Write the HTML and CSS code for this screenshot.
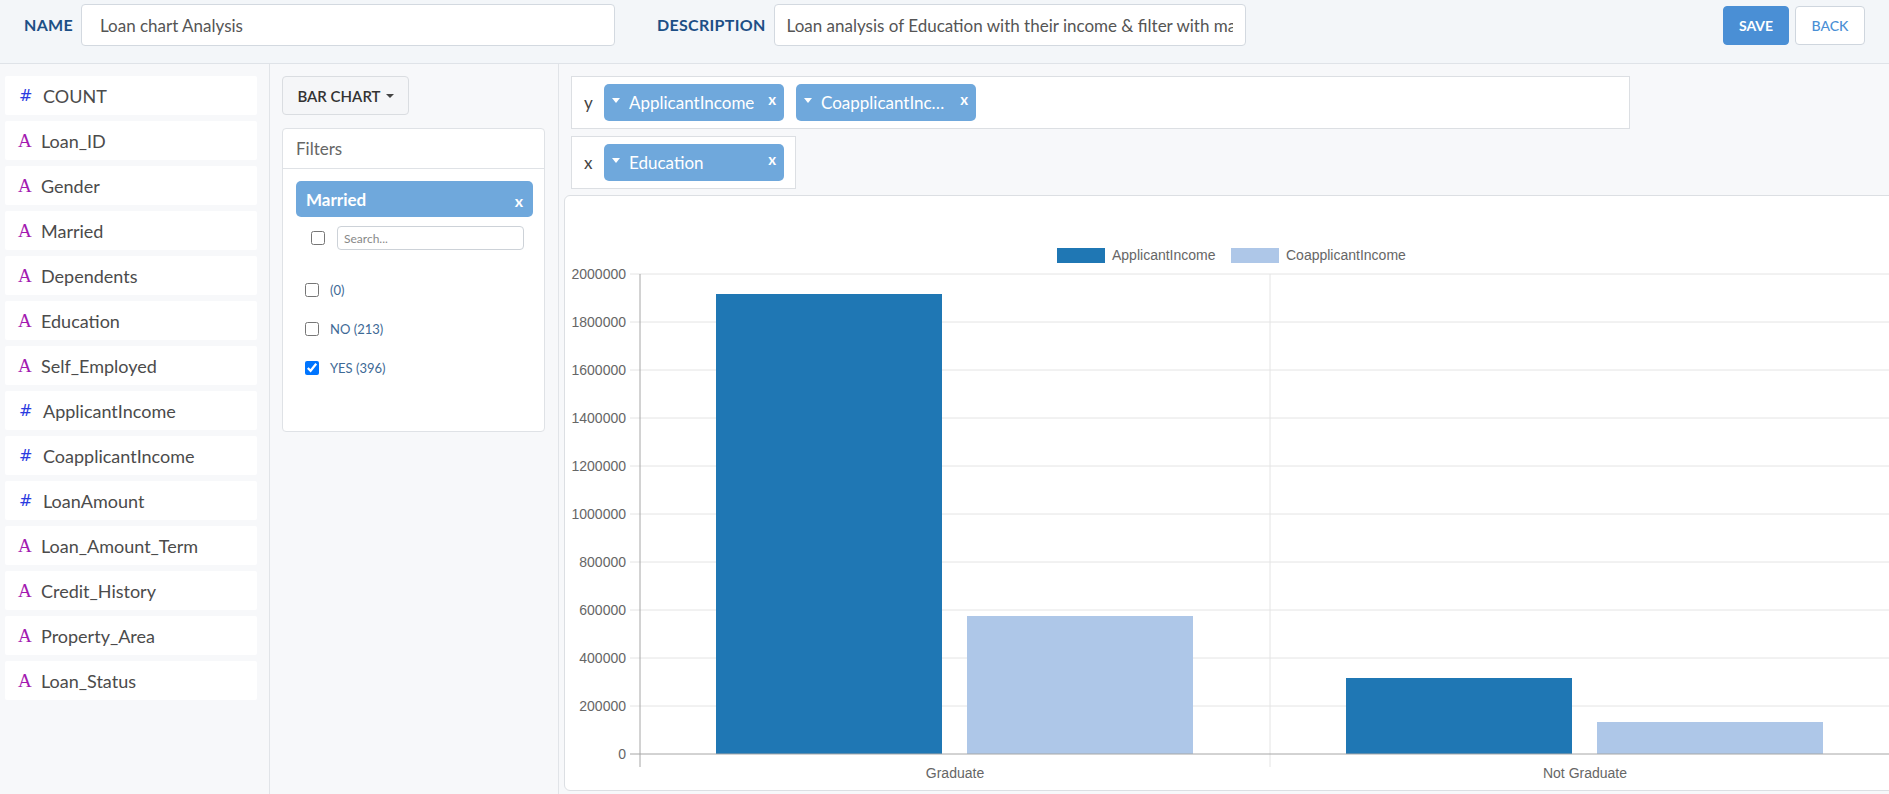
FILE: index.html
```html
<!DOCTYPE html>
<html>
<head>
<meta charset="utf-8">
<link rel="stylesheet" href="styles.css">
</head>
<body>
<header class="topbar">
  <label class="field-label">NAME</label>
  <input class="field-input name-input" value="Loan chart Analysis">
  <label class="field-label desc-label">DESCRIPTION</label>
  <input class="field-input desc-input" value="Loan analysis of Education with their income &amp; filter with married">
  <div class="actions">
    <button class="btn btn-save">SAVE</button>
    <button class="btn btn-back">BACK</button>
  </div>
</header>
<main class="main">
  <aside class="fields">
    <div class="field"><span class="ico num">#</span><span class="fname num-name">COUNT</span></div>
    <div class="field"><span class="ico str">A</span><span class="fname">Loan_ID</span></div>
    <div class="field"><span class="ico str">A</span><span class="fname">Gender</span></div>
    <div class="field"><span class="ico str">A</span><span class="fname">Married</span></div>
    <div class="field"><span class="ico str">A</span><span class="fname">Dependents</span></div>
    <div class="field"><span class="ico str">A</span><span class="fname">Education</span></div>
    <div class="field"><span class="ico str">A</span><span class="fname">Self_Employed</span></div>
    <div class="field"><span class="ico num">#</span><span class="fname num-name">ApplicantIncome</span></div>
    <div class="field"><span class="ico num">#</span><span class="fname num-name">CoapplicantIncome</span></div>
    <div class="field"><span class="ico num">#</span><span class="fname num-name">LoanAmount</span></div>
    <div class="field"><span class="ico str">A</span><span class="fname">Loan_Amount_Term</span></div>
    <div class="field"><span class="ico str">A</span><span class="fname">Credit_History</span></div>
    <div class="field"><span class="ico str">A</span><span class="fname">Property_Area</span></div>
    <div class="field"><span class="ico str">A</span><span class="fname">Loan_Status</span></div>
  </aside>
  <section class="controls">
    <button class="chart-type">BAR CHART <span class="caret-dark"></span></button>
    <div class="filters">
      <div class="filters-head">Filters</div>
      <div class="filters-body">
        <div class="filter-chip"><span>Married</span><span class="chip-x">x</span></div>
        <div class="search-row">
          <input type="checkbox" class="cb">
          <input class="search" placeholder="Search...">
        </div>
        <div class="opts">
          <label class="opt"><input type="checkbox" class="cb"><span>(0)</span></label>
          <label class="opt"><input type="checkbox" class="cb"><span>NO (213)</span></label>
          <label class="opt"><input type="checkbox" class="cb" checked><span>YES (396)</span></label>
        </div>
      </div>
    </div>
  </section>
  <section class="canvas-col">
    <div class="axis-box y-box">
      <span class="axis-name">y</span>
      <div class="pill"><span class="pill-caret"></span><span class="pill-text">ApplicantIncome</span><span class="pill-x">x</span></div>
      <div class="pill"><span class="pill-caret"></span><span class="pill-text">CoapplicantIncome</span><span class="pill-x">x</span></div>
    </div>
    <div class="axis-box x-box">
      <span class="axis-name">x</span>
      <div class="pill"><span class="pill-caret"></span><span class="pill-text">Education</span><span class="pill-x">x</span></div>
    </div>
    <div class="chart-card">
      <svg class="chart-svg" width="1336" height="594" viewBox="0 0 1336 594">
        <g class="grid">
          <line x1="65" y1="78" x2="1336" y2="78"/>
          <line x1="65" y1="126" x2="1336" y2="126"/>
          <line x1="65" y1="174" x2="1336" y2="174"/>
          <line x1="65" y1="222" x2="1336" y2="222"/>
          <line x1="65" y1="270" x2="1336" y2="270"/>
          <line x1="65" y1="318" x2="1336" y2="318"/>
          <line x1="65" y1="366" x2="1336" y2="366"/>
          <line x1="65" y1="414" x2="1336" y2="414"/>
          <line x1="65" y1="462" x2="1336" y2="462"/>
          <line x1="65" y1="510" x2="1336" y2="510"/>
          <line x1="705" y1="78" x2="705" y2="571"/>
        </g>
        <g class="ylabels">
          <text x="61" y="83">2000000</text>
          <text x="61" y="131">1800000</text>
          <text x="61" y="179">1600000</text>
          <text x="61" y="227">1400000</text>
          <text x="61" y="275">1200000</text>
          <text x="61" y="323">1000000</text>
          <text x="61" y="371">800000</text>
          <text x="61" y="419">600000</text>
          <text x="61" y="467">400000</text>
          <text x="61" y="515">200000</text>
          <text x="61" y="563">0</text>
        </g>
        <rect x="151" y="98" width="226" height="460" fill="#1f77b4"/>
        <rect x="402" y="420" width="226" height="138" fill="#aec7e8"/>
        <rect x="781" y="482" width="226" height="76" fill="#1f77b4"/>
        <rect x="1032" y="526" width="226" height="32" fill="#aec7e8"/>
        <line class="axis" x1="75" y1="78" x2="75" y2="571"/>
        <line class="axis" x1="65" y1="558" x2="1336" y2="558"/>
        <g class="xlabels">
          <text x="390" y="582">Graduate</text>
          <text x="1020" y="582">Not Graduate</text>
        </g>
        <g class="legend">
          <rect x="492" y="52" width="48" height="15" fill="#1f77b4"/>
          <text x="547" y="64">ApplicantIncome</text>
          <rect x="666" y="52" width="48" height="15" fill="#aec7e8"/>
          <text x="721" y="64">CoapplicantIncome</text>
        </g>
      </svg>
    </div>
  </section>
</main>
</body>
</html>
```
FILE: styles.css
```css
* { box-sizing: border-box; }
html, body { margin: 0; padding: 0; }
body {
  width: 1889px;
  height: 794px;
  overflow: hidden;
  font-family: Lato, "Open Sans", sans-serif;
  background: #f7f8fa;
  color: #4a4a4a;
}
.topbar {
  height: 64px;
  background: #f3f6f9;
  border-bottom: 1px solid #dfe3e8;
  display: flex;
  align-items: flex-start;
  padding: 4px 24px 0 24px;
}
.field-label {
  font-weight: 700;
  font-size: 16px;
  color: #1d4f86;
  letter-spacing: 0.3px;
  line-height: 42px;
  margin-right: 8px;
}
.desc-label { margin-left: 42px; }
.field-input {
  height: 42px;
  border: 1px solid #d3d9e0;
  border-radius: 4px;
  background: #fff;
  font-family: Lato, sans-serif;
  font-size: 17px;
  color: #555;
  padding: 0 12px 0 18px;
  outline: none;
}
.name-input { width: 534px; }
.desc-input { width: 472px; padding-left: 12px; }
.actions {
  margin-left: auto;
  display: flex;
  gap: 6px;
  padding-top: 2px;
}
.btn {
  height: 39px;
  border-radius: 4px;
  font-family: Lato, sans-serif;
  font-size: 14px;
  cursor: pointer;
}
.btn-save {
  width: 66px;
  background: #4a8fd5;
  border: 1px solid #4a8fd5;
  color: #fff;
  font-weight: 700;
}
.btn-back {
  width: 70px;
  background: #fff;
  border: 1px solid #cfd6de;
  color: #4a8fd5;
  font-weight: 500;
}
.main {
  display: flex;
  height: 730px;
  overflow: hidden;
}
.fields {
  width: 270px;
  flex: none;
  border-right: 1px solid #e1e4e8;
  padding: 12px 12px 0 5px;
  display: flex;
  flex-direction: column;
  gap: 6px;
}
.field {
  height: 39px;
  background: #fff;
  border-radius: 2px;
  display: flex;
  align-items: center;
  padding-left: 13px;
}
.ico { width: 23px; flex: none; }
.ico.num { color: #2b3be0; font-size: 16px; font-family: "DejaVu Sans", sans-serif; padding-left: 1px; }
.ico.str { color: #a31ab0; font-size: 19px; font-family: "Liberation Serif", serif; }
.fname { font-size: 18px; color: #4b4b4b; }
.num-name { margin-left: 2px; }
.controls {
  width: 289px;
  flex: none;
  border-right: 1px solid #e1e4e8;
  padding: 12px 0 0 12px;
}
.chart-type {
  width: 127px;
  height: 39px;
  background: #f5f6f8;
  border: 1px solid #dadde1;
  border-radius: 4px;
  font-family: Lato, sans-serif;
  font-size: 15px;
  font-weight: 600;
  color: #333;
  display: flex;
  align-items: center;
  justify-content: center;
  gap: 5px;
  padding: 0;
}
.caret-dark {
  width: 0; height: 0;
  border-left: 4px solid transparent;
  border-right: 4px solid transparent;
  border-top: 4px solid #444;
}
.filters {
  margin-top: 13px;
  width: 263px;
  height: 304px;
  background: #fff;
  border: 1px solid #dfe2e6;
  border-radius: 4px;
}
.filters-head {
  height: 40px;
  border-bottom: 1px solid #dfe2e6;
  padding-left: 13px;
  font-size: 17px;
  color: #666;
  line-height: 39px;
}
.filters-body { padding: 12px 12px 0 13px; }
.filter-chip {
  height: 36px;
  width: 237px;
  background: #6fa8dc;
  border-radius: 5px;
  display: flex;
  align-items: center;
  justify-content: space-between;
  padding: 0 10px 0 10px;
  color: #fff;
  font-weight: 700;
  font-size: 17px;
}
.chip-x { font-size: 16px; margin-top: 2px; }
.search-row {
  display: flex;
  align-items: center;
  margin-top: 9px;
  padding-left: 15px;
  gap: 12px;
}
.cb {
  width: 14px;
  height: 14px;
  margin: 0;
  flex: none;
}
.search {
  width: 187px;
  height: 24px;
  border: 1px solid #cdd2d8;
  border-radius: 4px;
  font-family: Lato, sans-serif;
  font-size: 12px;
  padding: 0 6px;
  color: #555;
}
.search::placeholder { color: #888; }
.opts {
  display: flex;
  flex-direction: column;
  gap: 25px;
  margin-top: 33px;
  padding-left: 9px;
}
.opt {
  display: flex;
  align-items: center;
  gap: 11px;
  height: 14px;
  font-size: 13px;
  color: #3e6a96;
}
.canvas-col {
  flex: none;
  width: 1340px;
  padding: 12px 0 0 5px;
}
.axis-box {
  height: 53px;
  background: #fff;
  border: 1px solid #dcdfe3;
  margin-left: 7px;
  display: flex;
  align-items: center;
  padding-left: 12px;
  gap: 12px;
}
.y-box { width: 1059px; }
.x-box { width: 225px; margin-top: 7px; }
.axis-name {
  width: 8px;
  font-size: 17px;
  color: #444;
}
.pill {
  width: 180px;
  height: 37px;
  background: #6fa8dc;
  border-radius: 5px;
  display: flex;
  align-items: center;
  position: relative;
  padding-left: 8px;
  color: #fff;
}
.pill-caret {
  width: 0; height: 0;
  border-left: 4px solid transparent;
  border-right: 4px solid transparent;
  border-top: 5px solid #fff;
  margin-right: 9px;
  margin-top: -4px;
}
.pill-text {
  font-size: 17px;
  max-width: 132px;
  white-space: nowrap;
  overflow: hidden;
  text-overflow: ellipsis;
}
.pill-x {
  position: absolute;
  right: 8px;
  top: 6px;
  font-weight: 700;
  font-size: 15px;
}
.chart-card {
  margin-top: 6px;
  width: 1338px;
  height: 596px;
  background: #fff;
  border: 1px solid #dcdfe3;
  border-radius: 6px;
  overflow: hidden;
}
.chart-svg { display: block; font-family: "Liberation Sans", Arial, sans-serif; }
.grid line { stroke: #e4e4e4; stroke-width: 1; }
.axis { stroke: #a6a6a6; stroke-width: 1; }
.ylabels text { font-size: 14px; fill: #666; text-anchor: end; }
.xlabels text { font-size: 14px; fill: #666; text-anchor: middle; }
.legend text { font-size: 14px; fill: #666; }
```
